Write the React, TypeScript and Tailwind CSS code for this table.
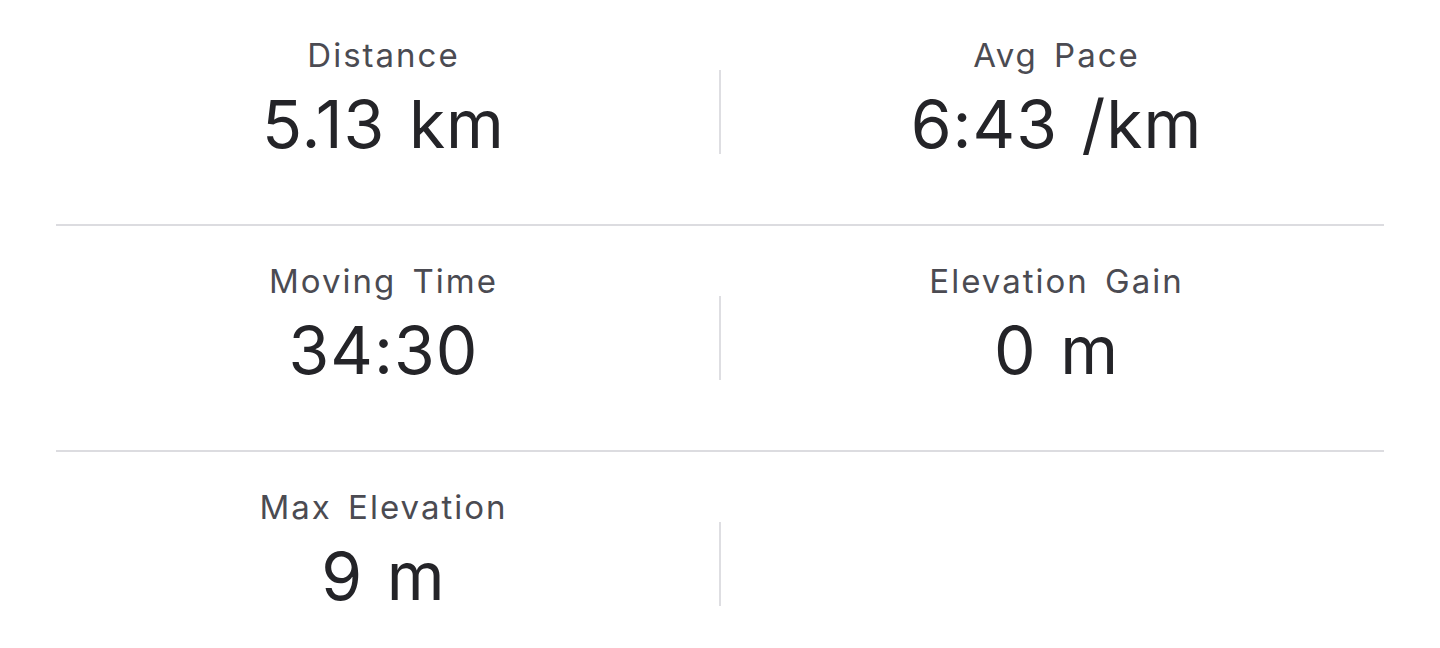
import React from "react";

const rows: [string, string, string | null, string | null][] = [
  ["Distance", "5.13 km", "Avg Pace", "6:43 /km"],
  ["Moving Time", "34:30", "Elevation Gain", "0 m"],
  ["Max Elevation", "9 m", null, null],
];

function Cell({ label, value }: { label: string | null; value: string | null }) {
  return (
    <div className="flex-1 self-start pt-[35px] flex flex-col items-center">
      {label && (
        <>
          <div className="text-[33px] leading-[40px] text-[#4b4b52] tracking-[2px] [word-spacing:5px]">{label}</div>
          <div className="mt-[9px] text-[66px] leading-[80px] text-[#242428] tracking-[1px] [word-spacing:4px]">{value}</div>
        </>
      )}
    </div>
  );
}

export default function App() {
  return (
    <div
      className="w-[1440px] h-[648px] bg-white overflow-hidden"
      style={{ fontFamily: "Inter, 'Noto Sans', sans-serif" }}
    >
      {rows.map((r, i) => (
        <div key={i}>
          <div className="h-[224px] px-[48px] flex items-center">
            <Cell label={r[0]} value={r[1]} />
            <div className="w-[2px] h-[84px] bg-[#dedee2]" />
            <Cell label={r[2]} value={r[3]} />
          </div>
          {i < 2 && <div className="mx-[56px] h-[2px] bg-[#dcdce0]" />}
        </div>
      ))}
    </div>
  );
}
